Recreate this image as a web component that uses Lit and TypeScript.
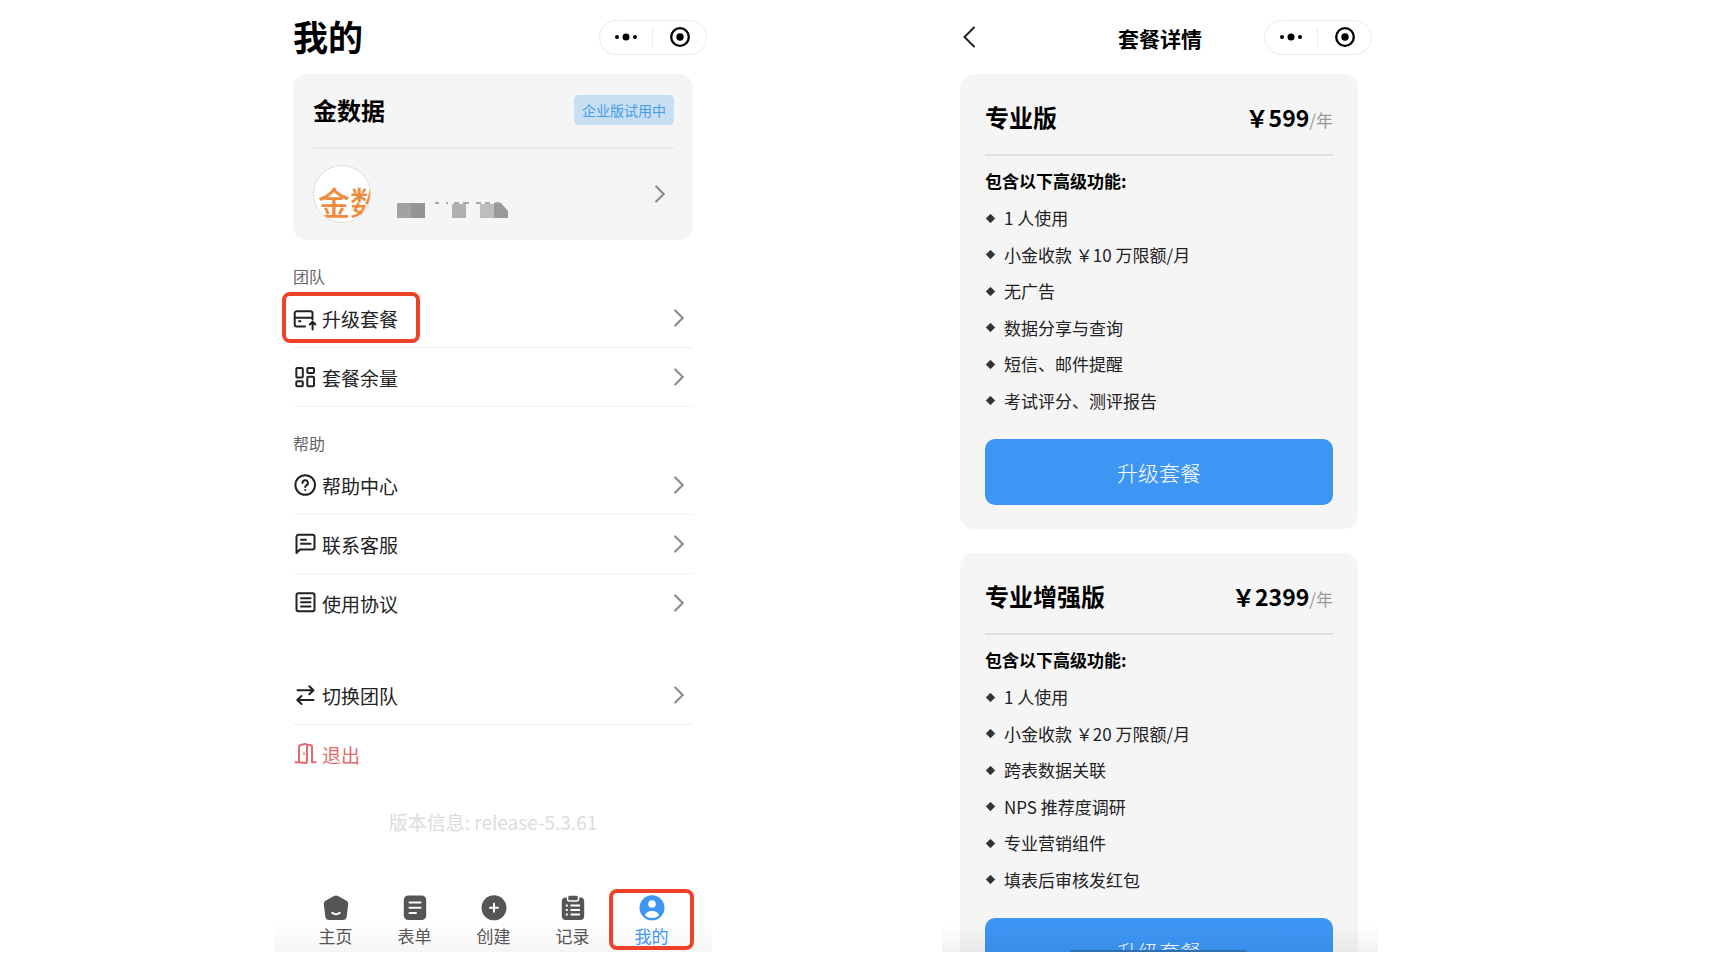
import { LitElement, html, css, svg } from "lit";
import { customElement, property } from "lit/decorators.js";

const FONT = css`"Noto Sans CJK SC", "Noto Sans", sans-serif`;

const line = (body: unknown) => svg`<g fill="none" stroke="currentColor" stroke-width="2" stroke-linecap="round" stroke-linejoin="round">${body}</g>`;

const ICONS: Record<string, unknown> = {
  upgrade: line(svg`<path d="M12 20.500H3.700a2 2 0 0 1-2-2V7.300a2 2 0 0 1 2-2h13.800a2 2 0 0 1 2 2v6.200M1.700 11.700h17.800M6 15.300h1.500M19.600 23.500v-7.500M16.800 18.500l2.800-2.800 2.800 2.800"/>`),
  quota: line(svg`<rect x="3.300" y="3" width="6.500" height="9.500" rx="1"/><rect x="14.300" y="3" width="6.700" height="5" rx="1"/><rect x="3.300" y="16.300" width="6.500" height="5" rx="1"/><rect x="14.300" y="11.800" width="6.700" height="9.500" rx="1"/>`),
  help: line(svg`<circle cx="12.200" cy="12" r="9.800"/><path d="M9.500 10a2.700 2.700 0 1 1 4 2.300c-.9.500-1.300.9-1.300 1.700"/><path d="M12.200 17v.1"/>`),
  chat: line(svg`<path d="M3.500 21V4.800a2 2 0 0 1 2-2h14a2 2 0 0 1 2 2v10.700a2 2 0 0 1-2 2H7zM8 7.800h5M8 11.700h9.500"/>`),
  terms: line(svg`<rect x="3.500" y="2.300" width="18" height="18" rx="2"/><path d="M8 7.200h9.500M8 11.300h9.500M8 15.400h9.500"/>`),
  swap: line(svg`<path d="M4.500 7.300H20M16.300 3.300l4.200 4L16.300 11.300M20.500 17H4.800M8.500 13l-4.200 4 4.200 4"/>`),
  exit: line(svg`<path d="M2.500 20.200H6V5q0-1.500 1.500-2l4.500-1q2-.4 2 1.500v16q0 2-2 1.500L6 20.200M14 3h3q2 0 2 2v15.200h3.500"/><path d="M11 11.500v.3"/>`),
};

@customElement("app-icon")
class AppIcon extends LitElement {
  @property() name = "";
  static styles = css`
    :host { display: block; width: 24px; height: 24px; flex: none; }
    svg { display: block; overflow: visible; }
  `;
  render() {
    return html`<svg width="24" height="24" viewBox="0 0 24 24" aria-hidden="true">${ICONS[this.name]}</svg>`;
  }
}

@customElement("mini-capsule")
class MiniCapsule extends LitElement {
  static styles = css`
    :host { display: flex; align-items: center; box-sizing: border-box; width: 108px; height: 35px; border: 1px solid #ebebeb; border-radius: 18px; background: #fff; }
    button { flex: 1; height: 21px; padding: 0; border: 0; background: none; display: grid; place-items: center; color: #000; }
    button + button { border-left: 1px solid #ebebeb; padding-left: 2px; }
    svg { display: block; }
  `;
  render() {
    return html`
      <button aria-label="更多"><svg width="22" height="8" viewBox="0 0 22 8"><circle cx="2" cy="4" r="2"/><circle cx="11" cy="4" r="3.500"/><circle cx="20" cy="4" r="2"/></svg></button>
      <button aria-label="关闭"><svg width="20" height="20" viewBox="0 0 20 20"><circle cx="10" cy="10" r="8.800" fill="none" stroke="#000" stroke-width="2.300"/><circle cx="10" cy="10" r="3.700"/></svg></button>`;
  }
}

const chevron = html`<svg class="chevron" width="10" height="18" viewBox="0 0 10 18" aria-hidden="true"><path d="M1.200 1.500L8.700 9l-7.500 7.500" fill="none" stroke="#8c8c8c" stroke-width="2.200" stroke-linecap="round"/></svg>`;

type Row = { icon: string; label: string; mark?: boolean; danger?: boolean };
const GROUPS: { title?: string; rows: Row[]; closed?: boolean }[] = [
  { title: "团队", closed: true, rows: [{ icon: "upgrade", label: "升级套餐", mark: true }, { icon: "quota", label: "套餐余量" }] },
  { title: "帮助", rows: [{ icon: "help", label: "帮助中心" }, { icon: "chat", label: "联系客服" }, { icon: "terms", label: "使用协议" }] },
  { rows: [{ icon: "swap", label: "切换团队" }, { icon: "exit", label: "退出", danger: true }] },
];

const TABS = [
  { label: "主页", art: svg`<path d="M11 1q2-1.200 4 0l8.500 4.800q2 1.200 1.700 3.400l-1.500 12.300q-.5 3.500-4 3.500H6.300q-3.500 0-4-3.500L.8 9.200Q.5 7 2.500 5.800z"/><path d="M9.300 17.800q3.700 2.800 7.400 0" fill="none" stroke="#fff" stroke-width="2" stroke-linecap="round"/>` },
  { label: "表单", art: svg`<rect x="1.800" y=".5" width="22.400" height="24.500" rx="4.500"/><path d="M7.500 7.500h11M7.500 12.700h11M7.500 17.900h6.500" fill="none" stroke="#fff" stroke-width="2" stroke-linecap="round"/>` },
  { label: "创建", art: svg`<circle cx="13" cy="12.800" r="12.500"/><path d="M13 8.800v8M9 12.800h8" fill="none" stroke="#fff" stroke-width="2" stroke-linecap="round"/>` },
  { label: "记录", art: svg`<rect x="1.800" y="2.500" width="22.400" height="22.500" rx="4"/><rect x="7.500" y="0" width="11" height="6" rx="2" stroke="#fff" stroke-width="1.500"/><path d="M5.800 10.500h2M5.800 15h2M5.800 19.500h2M10.500 10.500h9.500M10.500 15h9.500M10.500 19.500h9.500" fill="none" stroke="#fff" stroke-width="1.800"/>` },
  { label: "我的", active: true, art: svg`<circle cx="13" cy="12.800" r="12.500"/><circle cx="13" cy="9" r="3.800" fill="#fff"/><path d="M6 20.500q1-4.500 7-4.500t7 4.500Q17 23 13 23t-7-2.500z" fill="#fff"/>` },
];

@customElement("profile-screen")
class ProfileScreen extends LitElement {
  static styles = css`
    :host { display: flex; flex-direction: column; box-sizing: border-box; width: 438px; height: 100%; overflow: hidden; position: relative; background: linear-gradient(#fff 0 97%, #f5f5f5 100%); }
    .top { display: flex; align-items: center; justify-content: space-between; height: 74px; padding: 0 5px 0 19px; flex: none; box-sizing: border-box; }
    h1 { margin: 0; padding-bottom: 2px; font-size: 35px; line-height: 40px; font-weight: 700; }
    .card { margin: 0 19px; padding: 0 19px 0 20px; border-radius: 14px; background: #f5f5f5; }
    .head { display: flex; align-items: center; justify-content: space-between; box-sizing: border-box; height: 75px; padding-bottom: 2px; border-bottom: 2px solid #ebebeb; }
    h2 { margin: 0; font-size: 24px; line-height: 32px; }
    .badge { padding: 0 8px; border-radius: 5px; background: #c8dff3; color: #459ee6; font-size: 14px; line-height: 30px; }
    .user { display: flex; align-items: center; box-sizing: border-box; height: 91px; padding-bottom: 2px; color: inherit; text-decoration: none; }
    .avatar { box-sizing: border-box; width: 58px; height: 58px; border: 1px solid #ddd; border-radius: 50%; background: #fff; overflow: hidden; color: #f08a3c; font-size: 32px; line-height: 70px; font-weight: 500; white-space: nowrap; padding-left: 4px; }
    .masked { margin: 32px auto 0 26px; }
    .user .chevron { margin-right: 9px; }
    .group { margin: 25px 19px 0; }
    .group.plain { margin-top: 33px; }
    h3 { margin: 0 0 2px; font-size: 16px; line-height: 22px; font-weight: 400; color: #666; }
    ul { margin: 0; padding: 0; list-style: none; }
    li { border-bottom: 1px solid #f0f0f0; }
    li:last-child { border-color: transparent; }
    .closed li:last-child { border-color: #f0f0f0; }
    .row { display: flex; align-items: center; justify-content: space-between; height: 58px; padding-right: 9px; color: #222; text-decoration: none; font-size: 19px; line-height: 28px; }
    .label { display: flex; align-items: center; gap: 5px; position: relative; }
    .text { padding-top: 2px; }
    .row.danger { color: #e26b6b; }
    .mark::after, .tab.active::after { content: ""; position: absolute; border: 4px solid #ee4228; border-radius: 8px; }
    .mark::after { inset: -11px -22px -10px -11px; }
    .version { margin: 24px 19px 0; text-align: center; color: #dcdcdc; font-size: 19px; line-height: 28px; }
    nav { display: flex; margin-top: auto; padding: 0 21px 2px 22px; }
    .tab { flex: 1; display: flex; flex-direction: column; align-items: center; gap: 2px; padding: 6px 0 2px; position: relative; color: #555; text-decoration: none; font-size: 17px; line-height: 25px; }
    .tab svg { fill: currentColor; }
    .tab.active { color: #3d95f4; }
    .tab.active::after { inset: 0 -3px; }
  `;
  render() {
    return html`
      <header class="top"><h1>我的</h1><mini-capsule></mini-capsule></header>
      <section class="card">
        <div class="head"><h2>金数据</h2><span class="badge">企业版试用中</span></div>
        <a class="user" href="#account" aria-label="账号">
          <span class="avatar">金数</span>
          <svg class="masked" width="112" height="16" viewBox="0 0 112 16" aria-hidden="true">
            <path d="M0 1h14v15H0z" fill="#a2a2a2"/><path d="M14 1h14v15H14z" fill="#949494"/>
            <path d="M55 2h14v14H55z" fill="#b0b0b0"/><path d="M83 2h14v14H83z" fill="#bdbdbd"/><path d="M97 1h7l7 8v7H97z" fill="#999"/>
            <path d="M38 1h4M49 1h2M57 1h5M66 1h6M79 1h5M88 1h5M98 1h5" stroke="#aaa" stroke-width="2"/>
          </svg>
          ${chevron}
        </a>
      </section>
      ${GROUPS.map((g) => html`
        <section class="group ${g.title ? "" : "plain"} ${g.closed ? "closed" : ""}">
          ${g.title ? html`<h3>${g.title}</h3>` : ""}
          <ul>${g.rows.map((r) => html`
            <li><a class="row ${r.danger ? "danger" : ""}" href="#${r.icon}">
              <span class="label ${r.mark ? "mark" : ""}"><app-icon name=${r.icon}></app-icon><span class="text">${r.label}</span></span>
              ${r.danger ? "" : chevron}
            </a></li>`)}</ul>
        </section>`)}
      <p class="version">版本信息: release-5.3.61</p>
      <nav>${TABS.map((t) => html`
        <a class="tab ${t.active ? "active" : ""}" href="#tab"><svg width="26" height="26" viewBox="0 0 26 26" aria-hidden="true">${t.art}</svg>${t.label}</a>`)}</nav>`;
  }
}

const PLANS = [
  { name: "专业版", price: "￥599", items: ["1 人使用", "小金收款 ￥10 万限额/月", "无广告", "数据分享与查询", "短信、邮件提醒", "考试评分、测评报告"] },
  { name: "专业增强版", price: "￥2399", items: ["1 人使用", "小金收款 ￥20 万限额/月", "跨表数据关联", "NPS 推荐度调研", "专业营销组件", "填表后审核发红包"] },
];

@customElement("plans-screen")
class PlansScreen extends LitElement {
  static styles = css`
    :host { display: block; box-sizing: border-box; width: 436px; height: 100%; overflow: hidden; position: relative; }
    .top { display: grid; grid-template-columns: 1fr auto 1fr; align-items: center; height: 74px; padding: 0 6px; }
    .back { justify-self: start; margin-left: 14px; padding: 0; border: 0; background: none; color: #222; }
    .back svg { display: block; }
    h1 { margin: 0; padding-top: 2px; font-size: 21px; line-height: 32px; }
    mini-capsule { justify-self: end; }
    .plans { display: grid; gap: 24px; padding: 0 20px 0 18px; }
    .plan { padding: 0 25px 24px; border-radius: 14px; background: #f5f5f5; }
    .head { display: flex; align-items: baseline; justify-content: space-between; padding: 25px 0 19px; border-bottom: 2px solid #e0e0e0; }
    h2 { margin: 0; font-size: 24px; line-height: 36px; }
    .price { font-size: 23px; line-height: 36px; font-weight: 700; }
    .price small { font-size: 17px; line-height: 1; font-weight: 400; color: #999; }
    h3 { margin: 8px 0 2px; font-size: 17px; line-height: 34px; }
    ul { display: grid; grid-auto-rows: 1fr; align-items: center; min-height: 219px; margin: 0; padding: 0; list-style: none; font-size: 17px; line-height: 26px; color: #222; }
    li { display: flex; align-items: center; gap: 8px; }
    .buy { display: block; width: 100%; height: 66px; margin-top: 20px; padding: 0; border: 0; border-radius: 10px; background: #3d95f4; color: #fff; font: inherit; font-size: 21px; font-weight: 300; }
    .shade { position: absolute; inset: auto 0 0; height: 28px; background: linear-gradient(transparent, rgba(0, 0, 0, 0.05)); pointer-events: none; }
    .home { position: absolute; left: 50%; bottom: 0; width: 177px; height: 2px; margin-left: -90px; border-radius: 2px 2px 0 0; background: #3071b6; }
  `;
  render() {
    return html`
      <header class="top">
        <button class="back" aria-label="返回"><svg width="14" height="22" viewBox="0 0 14 22"><path d="M12 1.500L2.500 11l9.500 9.500" fill="none" stroke="currentColor" stroke-width="2" stroke-linecap="round"/></svg></button>
        <h1>套餐详情</h1><mini-capsule></mini-capsule>
      </header>
      <main class="plans">${PLANS.map((p) => html`
        <article class="plan">
          <div class="head"><h2>${p.name}</h2><span class="price">${p.price}<small>/年</small></span></div>
          <h3>包含以下高级功能:</h3>
          <ul>${p.items.map((i) => html`<li><svg width="11" height="11" viewBox="0 0 11 11" aria-hidden="true"><path d="M5.500 1.300l4.200 4.200-4.200 4.200-4.200-4.200z" fill="#333" stroke="#333" stroke-linejoin="round"/></svg>${i}</li>`)}</ul>
          <button class="buy">升级套餐</button>
        </article>`)}</main>
      <div class="shade"></div><div class="home"></div>`;
  }
}

@customElement("app-root")
class AppRoot extends LitElement {
  static styles = css`
    :host { display: flex; justify-content: center; gap: 230px; box-sizing: border-box; height: 100vh; padding: 0 58px 6px 0; overflow: hidden; background: #fff; color: #000; font-family: ${FONT}; }
  `;
  render() {
    return html`<profile-screen></profile-screen><plans-screen></plans-screen>`;
  }
}
